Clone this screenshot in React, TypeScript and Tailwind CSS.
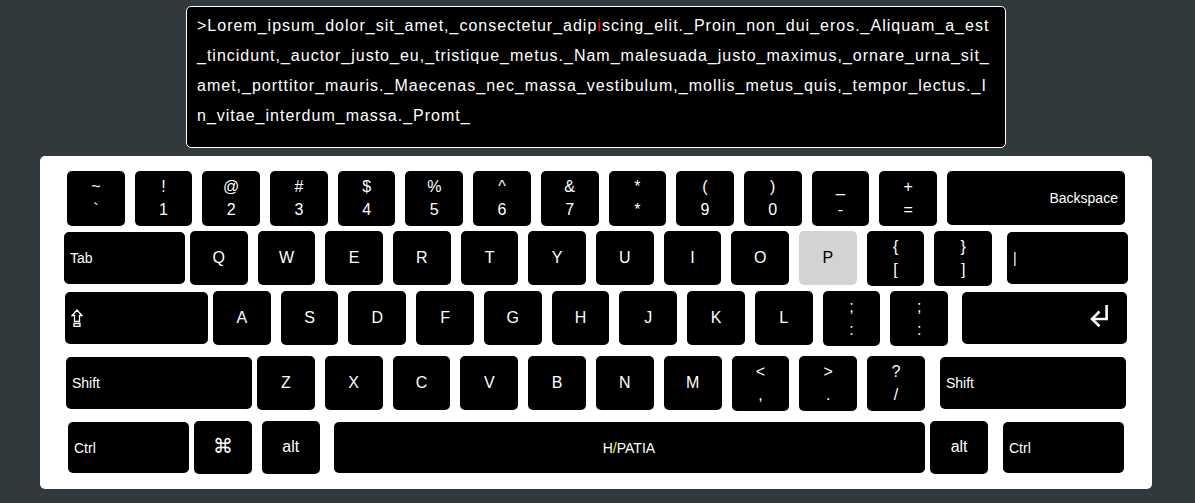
import React from "react";

type KeyDef = {
  labels: React.ReactNode[];
  kind?: "wide" | "space";
  className?: string;
  active?: boolean;
  icon?: React.ReactNode;
  name?: string;
};

const k = (...labels: string[]): KeyDef => ({ labels });

const CapsIcon = (
  <svg width="12" height="18" viewBox="0 0 12 18" fill="none" stroke="white" strokeWidth="1.3" aria-hidden="true">
    <path d="M6 1 L11 6.5 H8.5 V12.5 H3.5 V6.5 H1 Z" />
    <path d="M3 14.5 H9 V17.3 H3 Z" />
  </svg>
);

const EnterIcon = (
  <svg width="19" height="22" viewBox="0 0 19 22" fill="none" stroke="white" strokeWidth="2.6" aria-hidden="true">
    <path d="M16.6 0 V14 H2" />
    <path d="M9.5 6.5 L2 14 L9.5 21.3" />
  </svg>
);

const rows: { className: string; keys: KeyDef[] }[] = [
  {
    className: "px-[27px]",
    keys: [
      k("~", "`"), k("!", "1"), k("@", "2"), k("#", "3"), k("$", "4"), k("%", "5"), k("^", "6"),
      k("&", "7"), k("*", "*"), k("(", "9"), k(")", "0"), k("_", "-"), k("+", "="),
      { labels: ["Backspace"], kind: "wide", className: "h-[54px] w-[178px] justify-end" },
    ],
  },
  {
    className: "mt-[5px] px-6",
    keys: [
      { labels: ["Tab"], kind: "wide", className: "-mr-[5px] mt-px h-[52px] w-[121px]" },
      k("Q"), k("W"), k("E"), k("R"), k("T"), k("Y"), k("U"), k("I"), k("O"),
      { labels: ["P"], active: true },
      k("{", "["), k("}", "]"),
      { labels: ["|"], kind: "wide", className: "ml-[5px] mt-px h-[52px] w-[121px]" },
    ],
  },
  {
    className: "mt-[5px] px-[25px]",
    keys: [
      { labels: [], name: "Caps Lock", icon: CapsIcon, kind: "wide", className: "-mr-[5px] mt-px h-[52px] w-[143px]" },
      k("A"), k("S"), k("D"), k("F"), k("G"), k("H"), k("J"), k("K"), k("L"), k(";", ":"), k(";", ":"),
      { labels: [], name: "Enter", icon: EnterIcon, kind: "wide", className: "ml-1 mt-px h-[52px] w-[165px] justify-end pr-[18px] pb-1" },
    ],
  },
  {
    className: "mt-[10px] px-[26px]",
    keys: [
      { labels: ["Shift"], kind: "wide", className: "-mr-[5px] mt-px h-[52px] w-[186px]" },
      k("Z"), k("X"), k("C"), k("V"), k("B"), k("N"), k("M"), k("<", ","), k(">", "."), k("?", "/"),
      { labels: ["Shift"], kind: "wide", className: "ml-[5px] mt-px h-[52px] w-[186px]" },
    ],
  },
  {
    className: "mt-[10px] px-7",
    keys: [
      { labels: ["Ctrl"], kind: "wide", className: "-mr-[5px] mt-px h-[51px] w-[121px]" },
      { labels: [<span key="cmd" className="text-xl leading-[23px]">⌘</span>], className: "h-[53px] max-w-[58px]" },
      { labels: ["alt"], className: "h-[53px] max-w-[58px]" },
      {
        labels: [<span key="brand">H<span className="text-[#ffff00]">/</span>PATIA</span>],
        kind: "space",
        className: "ml-1 -mr-[5px] mt-px h-[51px]",
      },
      { labels: ["alt"], className: "h-[53px] max-w-[58px]" },
      { labels: ["Ctrl"], kind: "wide", className: "ml-[5px] mt-px h-[51px] w-[121px]" },
    ],
  },
];

function Key({ def }: { def: KeyDef }) {
  const { labels, kind, className = "", active, icon, name } = def;
  if (kind) {
    const layout = kind === "space" ? "grow-[10] basis-0 justify-center" : "shrink-0";
    return (
      <button
        type="button"
        aria-label={name}
        className={`flex items-center rounded-[5px] bg-black pr-[7px] pl-[6px] text-sm text-white ${layout} ${className}`}
      >
        {icon ?? labels[0]}
      </button>
    );
  }
  const height = className || (labels.length === 2 ? "h-[55px]" : "h-[54px]");
  const colors = active ? "bg-[#d3d3d3] text-black" : "bg-black text-white";
  return (
    <button
      type="button"
      className={`flex min-w-0 grow basis-0 flex-col items-center justify-center rounded-[5px] pb-[2px] text-base leading-[23px] ${colors} ${height}`}
    >
      {labels.map((label, i) => (
        <span key={i}>{label}</span>
      ))}
    </button>
  );
}

export default function App() {
  return (
    <main className="min-h-screen bg-[#32393c] pt-[6px] pr-[43px] pb-[14px] pl-10 font-['Liberation_Sans',Arial,sans-serif]">
      <p className="mx-auto min-h-[142px] max-w-[820px] rounded-[5px] border border-white bg-black px-[10px] py-1 text-base leading-[30px] tracking-[1px] break-all text-white">
        &gt;Lorem_ipsum_dolor_sit_amet,_consectetur_adip<span className="text-[#ff0000]">i</span>
        scing_elit._Proin_non_dui_eros._Aliquam_a_est_tincidunt,_auctor_justo_eu,_tristique_metus._Nam_malesuada_justo_maximus,_ornare_urna_sit_amet,_porttitor_mauris._Maecenas_nec_massa_vestibulum,_mollis_metus_quis,_tempor_lectus._In_vitae_interdum_massa._Promt_
      </p>
      <section aria-label="Keyboard" className="mt-2 rounded-[5px] bg-white pt-[15px] pb-[15px]">
        {rows.map((row, i) => (
          <div key={i} className={`flex items-start gap-[10px] ${row.className}`}>
            {row.keys.map((def, j) => (
              <Key key={j} def={def} />
            ))}
          </div>
        ))}
      </section>
    </main>
  );
}
